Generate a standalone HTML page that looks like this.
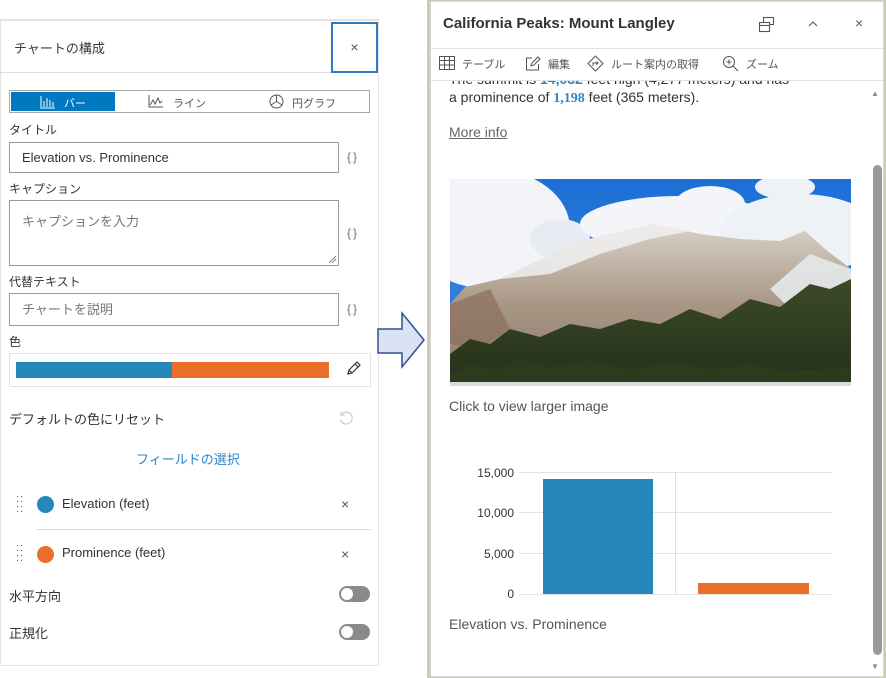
<!DOCTYPE html>
<html><head><meta charset="utf-8"><style>
*{margin:0;padding:0;box-sizing:border-box}
body{width:886px;height:678px;position:relative;background:#fff;font-family:"Liberation Sans","Noto Sans CJK JP",sans-serif;color:#323232;overflow:hidden}
.a{position:absolute;white-space:nowrap}
.lbl{font-size:12px;color:#323232}
.inp{position:absolute;border:1px solid #9a9a9a;background:#fff;font-size:13px;padding-left:12px}
.br{position:absolute;font-size:12px;color:#6a6a6a;letter-spacing:2px}
.tog{position:absolute;width:31px;height:16px;border-radius:8px;background:#8a8a8a}
.tog:after{content:"";position:absolute;left:2px;top:2px;width:12px;height:12px;border-radius:50%;background:#fff}
</style></head><body>
<!-- left panel -->
<div class="a" style="left:0;top:19px;width:379px;height:647px;border:1px solid #e4e4e4;border-top:2px solid #e6e3dc;background:#fff"></div>
<div class="a" style="left:0;top:72px;width:331px;height:1px;background:#dcdcdc"></div>
<div class="a" style="left:14px;top:38px;font-size:13px;color:#3a3a3a">チャートの構成</div>
<div class="a" style="left:331px;top:22px;width:47px;height:51px;border:2px solid #2f7ac0;text-align:center;line-height:47px;font-size:14px;color:#555">×</div>
<!-- segmented -->
<div class="a" style="left:9px;top:90px;width:361px;height:23px;border:1px solid #a8a8a8"></div>
<div class="a" style="left:11px;top:92px;width:104px;height:19px;background:#0079c1"></div>
<svg class="a" style="left:40px;top:95px" width="16" height="14" viewBox="0 0 16 14" fill="none" stroke="#fff" stroke-width="1"><path d="M1 1v12h14M4 6v6M7 3v9M10 5v7M13 7v5"/></svg>
<div class="a" style="left:64px;top:95px;font-size:11px;color:#fff">バー</div>
<svg class="a" style="left:148px;top:94px" width="16" height="14" viewBox="0 0 16 14" fill="none" stroke="#555" stroke-width="1"><path d="M1 1v12h14M2 11l3-5 2 4 3-6 2 5 2-2"/></svg>
<div class="a" style="left:173px;top:95px;font-size:11px;color:#555">ライン</div>
<svg class="a" style="left:269px;top:94px" width="15" height="15" viewBox="0 0 15 15" fill="none" stroke="#555" stroke-width="1"><circle cx="7.5" cy="7.5" r="6.5"/><path d="M7.5 7.5V1M7.5 7.5L2 11M7.5 7.5L13 11"/></svg>
<div class="a" style="left:292px;top:95px;font-size:11px;color:#555">円グラフ</div>
<div class="a lbl" style="left:9px;top:121px">タイトル</div>
<div class="inp" style="left:9px;top:142px;width:330px;height:31px;line-height:29px">Elevation vs. Prominence</div>
<div class="br" style="left:347px;top:150px">{}</div>
<div class="a lbl" style="left:9px;top:180px">キャプション</div>
<div class="inp" style="left:9px;top:200px;width:330px;height:66px;padding-top:10px;color:#757575">キャプションを入力</div>
<svg class="a" style="left:328px;top:255px" width="9" height="9"><path d="M1 8L8 1M4 8L8 4" stroke="#888"/></svg>
<div class="br" style="left:347px;top:226px">{}</div>
<div class="a lbl" style="left:9px;top:273px">代替テキスト</div>
<div class="inp" style="left:9px;top:293px;width:330px;height:33px;line-height:31px;color:#757575">チャートを説明</div>
<div class="br" style="left:347px;top:302px">{}</div>
<div class="a lbl" style="left:9px;top:333px">色</div>
<div class="a" style="left:9px;top:353px;width:362px;height:34px;border:1px solid #e2e2e2"></div>
<div class="a" style="left:16px;top:362px;width:156px;height:16px;background:#2687bb"></div>
<div class="a" style="left:172px;top:362px;width:157px;height:16px;background:#ea6f29"></div>
<svg class="a" style="left:345px;top:361px" width="16" height="16" viewBox="0 0 16 16" fill="none" stroke="#333" stroke-width="1.2"><path d="M3 13l1-4 8-8 3 3-8 8zM4 9l3 3M10 3l3 3"/></svg>
<div class="a" style="left:9px;top:409px;font-size:13px">デフォルトの色にリセット</div>
<svg class="a" style="left:338px;top:410px" width="16" height="16" viewBox="0 0 16 16" fill="none" stroke="#ccc" stroke-width="1.2"><path d="M3 5A6 6 0 1 1 2.5 10M3 1.5V5h3.5"/></svg>
<div class="a" style="left:136px;top:449px;font-size:13px;color:#2a86c5">フィールドの選択</div>
<div class="a" style="left:16px;top:497px;font-size:11px;line-height:5px;color:#666;letter-spacing:1px">::<br>::<br>::</div>
<div class="a" style="left:37px;top:496px;width:17px;height:17px;border-radius:50%;background:#2687bb"></div>
<div class="a" style="left:62px;top:496px;font-size:13px">Elevation (feet)</div>
<div class="a" style="left:341px;top:496px;font-size:14px;color:#555">×</div>
<div class="a" style="left:36px;top:529px;width:335px;height:1px;background:#dcdcdc"></div>
<div class="a" style="left:16px;top:546px;font-size:11px;line-height:5px;color:#666;letter-spacing:1px">::<br>::<br>::</div>
<div class="a" style="left:37px;top:546px;width:17px;height:17px;border-radius:50%;background:#ea6f29"></div>
<div class="a" style="left:62px;top:545px;font-size:13px">Prominence (feet)</div>
<div class="a" style="left:341px;top:546px;font-size:14px;color:#555">×</div>
<div class="a" style="left:9px;top:586px;font-size:13px">水平方向</div>
<div class="tog" style="left:339px;top:586px"></div>
<div class="a" style="left:9px;top:623px;font-size:13px">正規化</div>
<div class="tog" style="left:339px;top:624px"></div>
<!-- arrow -->
<svg class="a" style="left:376px;top:311px" width="52" height="58"><path d="M2 18H26V2L48 29 26 56V42H2Z" fill="#dae3f3" stroke="#2f528f" stroke-width="1.5"/></svg>
<!-- right panel -->
<div class="a" style="left:427px;top:0;width:459px;height:678px;background:#c9cdb8"></div>
<div class="a" style="left:430px;top:1px;width:454px;height:676px;background:#fff;border:1px solid #d8d8d8"></div>
<div class="a" style="left:443px;top:15px;font-size:15px;font-weight:bold;color:#333">California Peaks: Mount Langley</div>
<svg class="a" style="left:758px;top:16px" width="17" height="17" viewBox="0 0 17 17" fill="none" stroke="#555" stroke-width="1.1"><rect x="5.5" y="1.5" width="10" height="7"/><rect x="1.5" y="6.5" width="10" height="9" fill="#fff"/><path d="M1.5 9.5h10"/></svg>
<svg class="a" style="left:808px;top:20px" width="10" height="7" viewBox="0 0 10 7" fill="none" stroke="#555" stroke-width="1.1"><path d="M1 6l4-4 4 4"/></svg>
<div class="a" style="left:855px;top:15px;font-size:14px;color:#555">×</div>
<div class="a" style="left:431px;top:48px;width:452px;height:1px;background:#e0e0e0"></div>
<svg class="a" style="left:439px;top:56px" width="16" height="14" viewBox="0 0 16 14" fill="none" stroke="#555"><rect x=".5" y=".5" width="15" height="13"/><path d="M.5 4.5h15M.5 9h15M5.5 .5v13M10.5 .5v13"/></svg>
<div class="a" style="left:462px;top:56px;font-size:11px;color:#555">テーブル</div>
<svg class="a" style="left:525px;top:56px" width="16" height="15" viewBox="0 0 16 15" fill="none" stroke="#555"><path d="M7 2H1.5v12h12V8M6 10l1-3 6-6 2 2-6 6z"/></svg>
<div class="a" style="left:548px;top:56px;font-size:11px;color:#555">編集</div>
<svg class="a" style="left:587px;top:55px" width="17" height="17" viewBox="0 0 17 17" fill="none" stroke="#555"><path d="M8.5 1l7.5 7.5-7.5 7.5L1 8.5z"/><path d="M6 11V8h5M9.5 6.5L11 8 9.5 9.5"/></svg>
<div class="a" style="left:611px;top:56px;font-size:11px;color:#555">ルート案内の取得</div>
<svg class="a" style="left:722px;top:55px" width="17" height="17" viewBox="0 0 17 17" fill="none" stroke="#555"><circle cx="7" cy="7" r="5.5"/><path d="M11 11l5 5M4.5 7h5M7 4.5v5"/></svg>
<div class="a" style="left:746px;top:56px;font-size:11px;color:#555">ズーム</div>
<div class="a" style="left:431px;top:80px;width:452px;height:1px;background:#e0e0e0"></div>
<div class="a" style="left:449px;top:81px;height:6px;overflow:hidden;width:400px"><div style="font-size:14px;color:#333;margin-top:-10px">The summit is <b style="color:#2a86c5">14,032</b> feet high (4,277 meters) and has</div></div>
<div class="a" style="left:449px;top:89px;font-size:14px;color:#333">a prominence of <b style="color:#2a86c5;font-family:'Liberation Serif',serif">1,198</b> feet (365 meters).</div>
<div class="a" style="left:449px;top:124px;font-size:14px;color:#666;text-decoration:underline">More info</div>
<!-- image -->
<svg class="a" style="left:450px;top:179px" width="401" height="207" viewBox="0 0 401 207">
<defs><linearGradient id="sk" x1="0" y1="0" x2="0" y2="1"><stop offset="0" stop-color="#1d6fd6"/><stop offset="1" stop-color="#3f8be0"/></linearGradient>
<linearGradient id="mt" x1="0" y1="0" x2="0" y2="1"><stop offset="0" stop-color="#d8d2c8"/><stop offset=".5" stop-color="#a89684"/><stop offset="1" stop-color="#8a7c70"/></linearGradient>
<linearGradient id="fr" x1="0" y1="0" x2="0" y2="1"><stop offset="0" stop-color="#3c4a28"/><stop offset="1" stop-color="#243019"/></linearGradient></defs>
<rect width="401" height="207" fill="url(#sk)"/>
<ellipse cx="40" cy="50" rx="80" ry="60" fill="#f2f4f8"/>
<ellipse cx="110" cy="60" rx="30" ry="20" fill="#e8ecf2"/>
<ellipse cx="230" cy="45" rx="100" ry="28" fill="#f3f5f8"/>
<ellipse cx="260" cy="25" rx="35" ry="18" fill="#f3f5f8"/>
<ellipse cx="350" cy="55" rx="80" ry="40" fill="#eef1f5"/>
<ellipse cx="335" cy="8" rx="30" ry="12" fill="#eef1f5"/>
<path d="M0 125L15 108 50 100 130 62 205 45 250 55 290 60 330 62 355 52 375 70 401 90V207H0Z" fill="url(#mt)"/>
<path d="M50 100L130 62 205 45 240 52 200 60 150 75 100 95Z" fill="#f0f0f0" opacity=".85"/>
<path d="M320 110L360 75 401 90V130L350 140Z" fill="#e8ecef" opacity=".85"/>
<path d="M0 125L40 110 60 150 30 170 0 165Z" fill="#8c6f5c" opacity=".7"/>
<path d="M0 175L20 160 40 165 60 150 90 158 120 145 150 150 180 140 210 145 240 130 270 140 300 120 330 128 360 105 380 110 401 100V207H0Z" fill="url(#fr)"/>
<path d="M0 195L20 185 50 190 70 180 100 188 140 182 180 190 220 183 260 190 300 185 340 192 401 188V207H0Z" fill="#2c3a1e"/>
<rect y="203" width="401" height="4" fill="#d8dcd8"/>
</svg>
<div class="a" style="left:449px;top:398px;font-size:14px;color:#555">Click to view larger image</div>
<!-- chart -->
<div class="a" style="left:460px;top:453px;width:54px;text-align:right;font-size:12px;color:#333;line-height:40.4px">15,000<br>10,000<br>5,000<br>0</div>
<div class="a" style="left:519px;top:472px;width:313px;height:1px;background:#e3e3e3"></div>
<div class="a" style="left:519px;top:512px;width:313px;height:1px;background:#e3e3e3"></div>
<div class="a" style="left:519px;top:553px;width:313px;height:1px;background:#e3e3e3"></div>
<div class="a" style="left:519px;top:594px;width:313px;height:1px;background:#e3e3e3"></div>
<div class="a" style="left:675px;top:472px;width:1px;height:122px;background:#e0e0e0"></div>
<div class="a" style="left:543px;top:479px;width:110px;height:115px;background:#2687bb"></div>
<div class="a" style="left:698px;top:583px;width:111px;height:11px;background:#ea6f29"></div>
<div class="a" style="left:449px;top:616px;font-size:14px;color:#555">Elevation vs. Prominence</div>
<!-- scrollbar -->
<div class="a" style="left:871px;top:89px;font-size:8px;color:#888">▲</div>
<div class="a" style="left:873px;top:165px;width:9px;height:490px;border-radius:5px;background:#9a9a9a"></div>
<div class="a" style="left:871px;top:662px;font-size:8px;color:#888">▼</div>
</body></html>
